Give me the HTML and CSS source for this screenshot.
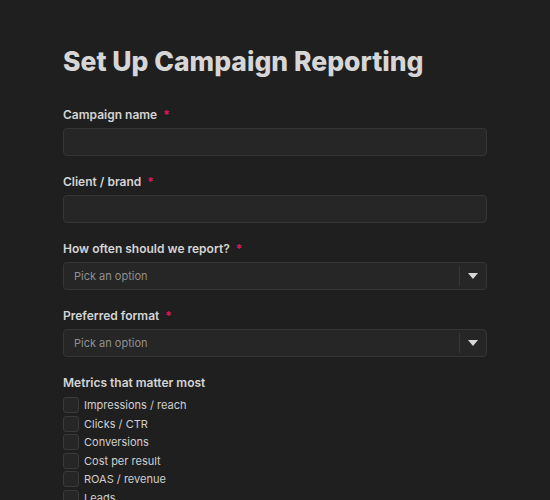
FILE: index.html
```html
<!DOCTYPE html>
<html lang="en">
<head>
    <meta charset="UTF-8">
    <meta name="viewport" content="width=device-width, initial-scale=1.0">
    <title>Set Up Campaign Reporting</title>
    <link rel="stylesheet" href="styles.css">
</head>
<body>
    <div class="form">
        <h1>Set Up Campaign Reporting</h1>

        <div class="field">
            <label>Campaign name <span class="req">*</span></label>
            <input type="text" class="input">
        </div>

        <div class="field">
            <label>Client / brand <span class="req">*</span></label>
            <input type="text" class="input">
        </div>

        <div class="field">
            <label>How often should we report? <span class="req">*</span></label>
            <div class="select">
                <span class="placeholder">Pick an option</span>
                <span class="arrow"><svg width="10" height="6" viewBox="0 0 10 6"><path d="M0 0h10L5 6z" fill="#d8d8d8"/></svg></span>
            </div>
        </div>

        <div class="field">
            <label>Preferred format <span class="req">*</span></label>
            <div class="select">
                <span class="placeholder">Pick an option</span>
                <span class="arrow"><svg width="10" height="6" viewBox="0 0 10 6"><path d="M0 0h10L5 6z" fill="#d8d8d8"/></svg></span>
            </div>
        </div>

        <div class="field">
            <label class="group">Metrics that matter most</label>
            <div class="checks">
                <div class="check"><span class="box"></span>Impressions / reach</div>
                <div class="check"><span class="box"></span>Clicks / CTR</div>
                <div class="check"><span class="box"></span>Conversions</div>
                <div class="check"><span class="box"></span>Cost per result</div>
                <div class="check"><span class="box"></span>ROAS / revenue</div>
                <div class="check"><span class="box"></span>Leads</div>
            </div>
        </div>
    </div>
</body>
</html>
```

FILE: styles.css
```css
body {
    margin: 0;
    background-color: #1f1f1f;
    font-family: Inter, "Noto Sans", sans-serif;
    color: #d4d4d4;
}
.form {
    width: 424px;
    margin-left: 63px;
    padding-top: 40px;
}
h1 {
    margin: 0 0 25px 0;
    font-size: 26.5px;
    font-weight: 800;
    line-height: 42px;
    color: #d6d6d6;
}
.field {
    margin-bottom: 18px;
}
label {
    display: block;
    font-size: 12px;
    font-weight: 600;
    line-height: 16px;
    margin-bottom: 5px;
    color: #d4d4d4;
}
label.group {
    margin-bottom: 6px;
}
.req {
    color: #e0195a;
    margin-left: 3px;
}
.input {
    display: block;
    box-sizing: border-box;
    width: 100%;
    height: 28px;
    background-color: #262626;
    border: 1px solid #353535;
    border-radius: 4px;
    outline: none;
}
.select {
    box-sizing: border-box;
    height: 28px;
    display: flex;
    align-items: center;
    background-color: #262626;
    border: 1px solid #353535;
    border-radius: 4px;
}
.placeholder {
    flex: 1;
    padding-left: 10px;
    font-size: 11px;
    color: #8f8f8f;
}
.arrow {
    width: 26px;
    height: 20px;
    display: flex;
    align-items: center;
    justify-content: center;
    border-left: 1px solid #383838;
}
.checks {
    display: flex;
    flex-direction: column;
    gap: 2.5px;
}
.check {
    display: flex;
    align-items: center;
    font-size: 11px;
    line-height: 16px;
    color: #cfcfcf;
}
.box {
    box-sizing: border-box;
    width: 16px;
    height: 16px;
    margin-right: 5px;
    background-color: #262626;
    border: 1px solid #3a3a3a;
    border-radius: 3px;
}
```
